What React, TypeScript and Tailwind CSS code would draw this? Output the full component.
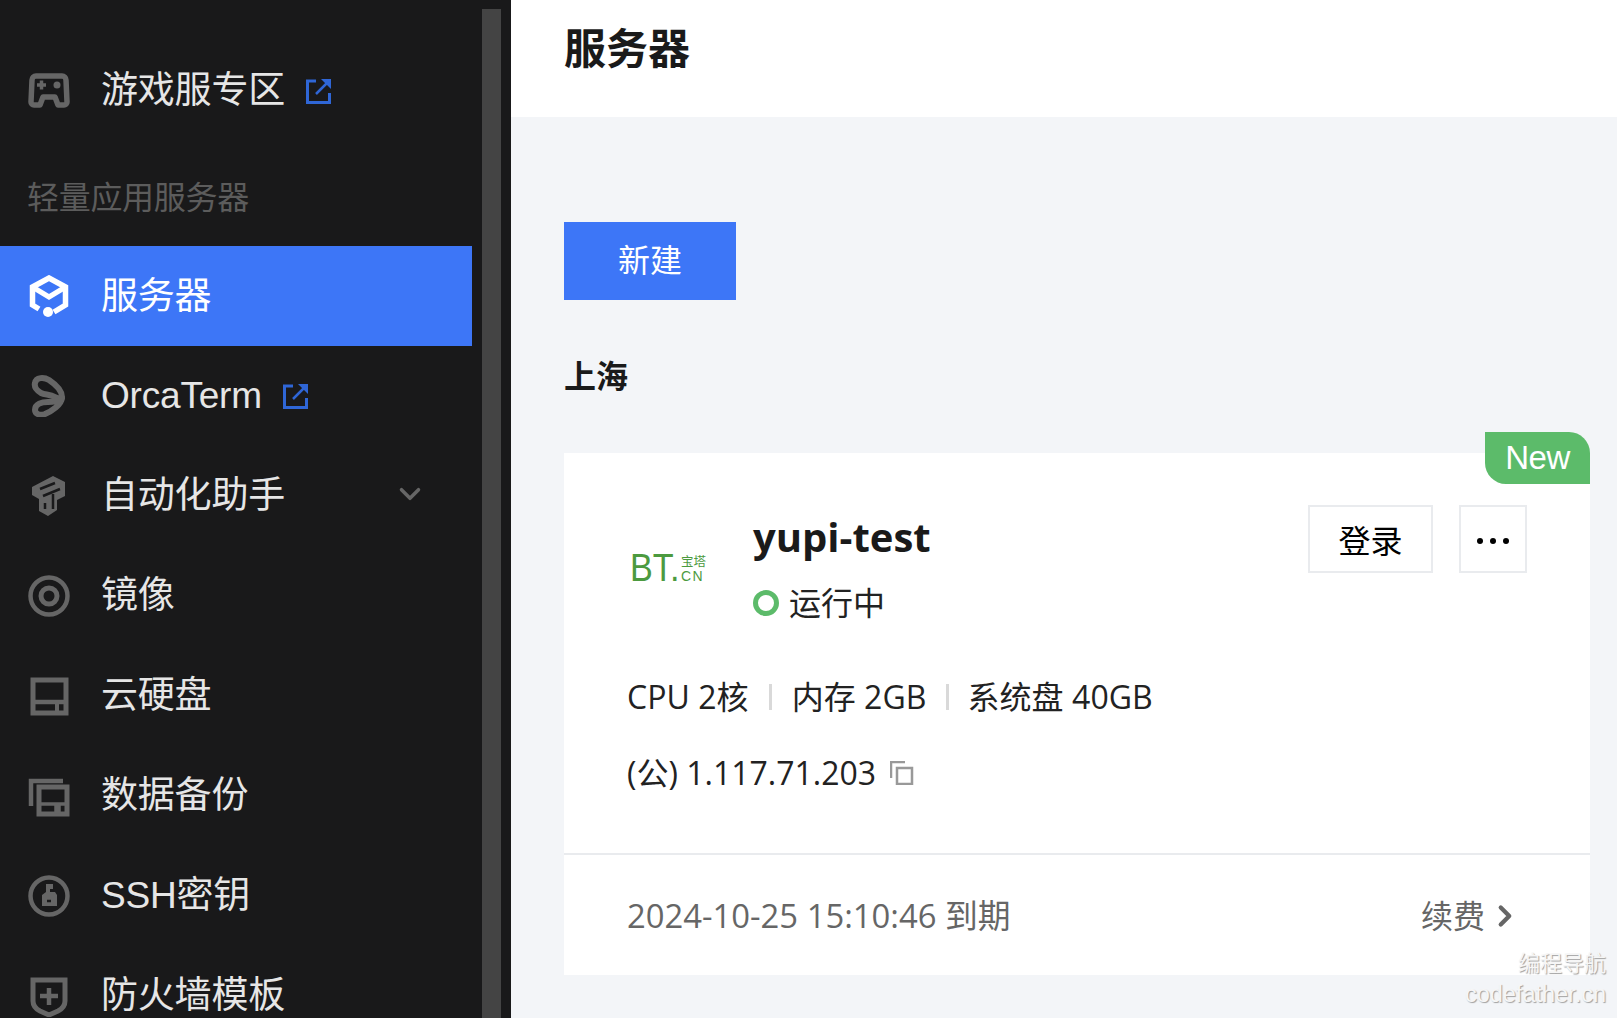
import type { ReactNode } from "react";
import { ChevronDown, ChevronRight } from "lucide-react";

function Icon({ children }: { children: ReactNode }) {
  return (
    <svg viewBox="0 0 42 42" className="h-[42px] w-[42px] shrink-0 text-[#666666]" fill="none">
      {children}
    </svg>
  );
}

const GameIcon = () => (
  <Icon>
    <path d="M8 6h26a4 4 0 0 1 4 4l1 22a3 3 0 0 1-3 3h-6l-3-8H15l-3 8H6a3 3 0 0 1-3-3l1-22a4 4 0 0 1 4-4z" stroke="currentColor" strokeWidth="5.500" strokeLinejoin="round" />
    <path d="M9 15h9M13.500 10.500v9" stroke="currentColor" strokeWidth="3.500" />
    <circle cx="29" cy="15" r="3.500" fill="currentColor" />
  </Icon>
);

const ServerIcon = () => (
  <svg viewBox="0 0 42 42" className="h-[42px] w-[42px] shrink-0 text-white" fill="none">
    <path d="M11 34 4.500 30V12L21 3l16.500 9v18L26 37" stroke="currentColor" strokeWidth="5.500" />
    <path d="M4.500 12 21 22l16.500-10" stroke="currentColor" strokeWidth="5" />
    <circle cx="20" cy="37" r="5" fill="currentColor" />
  </svg>
);

const OrcaIcon = () => (
  <Icon>
    <path d="M7 8C8 2 16 2 21 5c6 4 13 10 13 17 0 2-4 2-7 0-5-3-10-2-14-4C8 15 6 12 7 8z" stroke="currentColor" strokeWidth="6" strokeLinejoin="round" />
    <path d="M34 23c-1 7-10 13-17 16-5 2-10 0-10-4 0-6 7-8 13-8s10-1 14-4z" stroke="currentColor" strokeWidth="6" strokeLinejoin="round" />
  </Icon>
);

const TetrisIcon = () => (
  <Icon>
    <path d="M4 12 25 1l12 6v14l-8 4v10l-9 6-9-5V24l-7-4z" fill="currentColor" />
    <path d="M12 14 27 8M15 21l17-7M25 19v15M17 28v6" stroke="#19191a" strokeWidth="2.500" />
  </Icon>
);

const ImageIcon = () => (
  <Icon>
    <circle cx="21" cy="21" r="18.500" stroke="currentColor" strokeWidth="4.500" />
    <circle cx="21" cy="21" r="8" stroke="currentColor" strokeWidth="5" />
  </Icon>
);

const DiskIcon = () => (
  <Icon>
    <path d="M5 5h33v33H5z" stroke="currentColor" strokeWidth="5" />
    <path d="M5 27h33" stroke="currentColor" strokeWidth="4.500" />
    <path d="M27 29h4v7h-4z" fill="currentColor" />
  </Icon>
);

const BackupIcon = () => (
  <Icon>
    <path d="M3 31V6h32" stroke="currentColor" strokeWidth="4.500" />
    <path d="M11 12h28v27H11z" stroke="currentColor" strokeWidth="5" />
    <path d="M11 29h28M28 31h3v6h-3z" stroke="currentColor" strokeWidth="3.500" />
  </Icon>
);

const KeyIcon = () => (
  <Icon>
    <circle cx="21" cy="21" r="18.500" stroke="currentColor" strokeWidth="4.500" />
    <path d="M18 9h7v5h-3v3h5l2 3v11H14V20l4-3z" fill="currentColor" />
    <path d="M19 26h4" stroke="#19191a" strokeWidth="2.500" />
  </Icon>
);

const ShieldIcon = () => (
  <Icon>
    <path d="M5 5h32v21c0 5-3 8-7 10l-9 4-9-4c-4-2-7-5-7-10z" stroke="currentColor" strokeWidth="5" />
    <path d="M21 13v17M12 21h18" stroke="currentColor" strokeWidth="4.500" />
  </Icon>
);

const ExternalIcon = () => (
  <svg viewBox="0 0 25 25" className="ml-[21px] h-[25px] w-[25px] shrink-0 text-[#2f66d6]" fill="none">
    <path d="M10 2H1.500v21.500H23.500V14" stroke="currentColor" strokeWidth="3" />
    <path d="M10 15 21 4" stroke="currentColor" strokeWidth="2.500" />
    <path d="M15 0h10v10z" fill="currentColor" />
  </svg>
);

function NavItem({
  icon,
  label,
  active,
  external,
  expand,
}: {
  icon: ReactNode;
  label: string;
  active?: boolean;
  external?: boolean;
  expand?: boolean;
}) {
  return (
    <div className={`flex h-[100px] items-center pl-[28px] ${active ? "bg-[#3d76f7] text-white" : "text-[#e6e6e6]"}`}>
      <span className="flex w-[73px] shrink-0">{icon}</span>
      <span className={`text-[37px] leading-none tracking-[-0.2px] ${active ? "" : "pb-[1px]"}`}>{label}</span>
      {external && <ExternalIcon />}
      {expand && <ChevronDown className="mb-[5px] ml-auto mr-[45px] h-[34px] w-[34px] text-[#666666]" strokeWidth={2.5} />}
    </div>
  );
}

function Sidebar() {
  return (
    <aside className="flex h-full w-[511px] shrink-0 bg-[#19191a] font-['Liberation_Sans','Noto_Sans_CJK_SC',sans-serif]">
      <nav className="w-[472px] shrink-0 pt-[41px]">
        <NavItem icon={<GameIcon />} label="游戏服专区" external />
        <div className="flex h-[105px] items-center pl-[27px] pt-[9px] text-[32px] tracking-[-0.3px] text-[#5c5c5c]">
          轻量应用服务器
        </div>
        <NavItem icon={<ServerIcon />} label="服务器" active />
        <NavItem icon={<OrcaIcon />} label="OrcaTerm" external />
        <NavItem icon={<TetrisIcon />} label="自动化助手" expand />
        <NavItem icon={<ImageIcon />} label="镜像" />
        <NavItem icon={<DiskIcon />} label="云硬盘" />
        <NavItem icon={<BackupIcon />} label="数据备份" />
        <NavItem icon={<KeyIcon />} label="SSH密钥" />
        <NavItem icon={<ShieldIcon />} label="防火墙模板" />
      </nav>
      <div className="ml-[10px] mt-[9px] w-[19px] bg-[#444444]" />
    </aside>
  );
}

function BtLogo() {
  return (
    <div className="flex w-[126px] shrink-0 items-end pl-[3px] text-[#4c9a3f]">
      <span className="inline-block w-[51px] origin-left scale-x-[0.9] font-['Liberation_Sans',sans-serif] text-[38px] leading-[30px]">BT.</span>
      <span className="flex flex-col font-['Liberation_Sans','Noto_Sans_CJK_SC',sans-serif]">
        <span className="text-[12.500px] leading-[14px]">宝塔</span>
        <span className="text-[14px] leading-[14px] tracking-[1.500px]">CN</span>
      </span>
    </div>
  );
}

function ServerCard() {
  return (
    <div className="relative mt-[55px] h-[522px] bg-white">
      <div className="absolute right-0 top-[-21px] flex h-[52px] w-[105px] items-center justify-center rounded-tr-[21px] rounded-bl-[21px] bg-[#5cbb6a] font-['Liberation_Sans',sans-serif] text-[33px] tracking-[-0.5px] text-white">
        New
      </div>
      <div className="h-[400px] px-[63px] pt-[52px]">
        <div className="flex items-start">
          <div className="flex h-[78px] items-end"><BtLogo /></div>
          <div className="flex-1">
            <div className="h-[64px] text-[40px] font-bold leading-[64px] text-[#1a1a1a]">yupi-test</div>
            <div className="mt-[14px] flex items-center text-[32px] leading-[40px] text-[#222222]">
              <span className="mr-[10px] h-[26px] w-[26px] rounded-full border-[5px] border-[#5cbb6a]" />
              运行中
            </div>
          </div>
          <button className="h-[68px] w-[125px] border-2 border-[#e9ebee] pt-[3px] text-[32px] text-black">登录</button>
          <button className="ml-[26px] flex h-[68px] w-[68px] items-center justify-center gap-[7px] border-2 border-[#e9ebee] pt-[3px]">
            <span className="h-[6px] w-[6px] rounded-full bg-black" />
            <span className="h-[6px] w-[6px] rounded-full bg-black" />
            <span className="h-[6px] w-[6px] rounded-full bg-black" />
          </button>
        </div>
        <div className="mt-[54px] flex h-[40px] items-center text-[32px] tracking-[0.05px] text-[#222222]">
          <span>CPU 2核</span>
          <span className="mx-[20px] h-[26px] w-[3px] bg-[#d9d9d9]" />
          <span>内存 2GB</span>
          <span className="mx-[19px] h-[26px] w-[3px] bg-[#d9d9d9]" />
          <span>系统盘 40GB</span>
        </div>
        <div className="mt-[36px] flex h-[40px] items-center text-[32px] text-[#222222]">
          <span>(公) 1.117.71.203</span>
          <svg viewBox="0 0 24 24" className="ml-[14px] h-[24px] w-[24px] text-[#999999]" fill="none">
            <path d="M1 17V1h14" stroke="currentColor" strokeWidth="2.500" />
            <path d="M7 7h15v16H7z" stroke="currentColor" strokeWidth="2.500" />
          </svg>
        </div>
      </div>
      <div className="flex h-[122px] items-center justify-between border-t-2 border-[#e9ebee] pl-[63px] pr-[68px] pt-[2px] text-[32.800px] text-[#666666]">
        <span>2024-10-25 15:10:46 到期</span>
        <span className="flex items-center text-[32px]">
          续费
          <ChevronRight className="ml-[3px] h-[34px] w-[34px]" strokeWidth={3} />
        </span>
      </div>
    </div>
  );
}

export default function App() {
  return (
    <div className="relative flex h-[1018px] w-[1617px] overflow-hidden bg-[#f3f5f8] font-['Open_Sans','Noto_Sans_CJK_SC',sans-serif]">
      <Sidebar />
      <main className="min-w-0 flex-1">
        <header className="flex h-[117px] items-center bg-white pb-[23px] pl-[53px] text-[42px] font-bold text-[#1a1a1a]">
          服务器
        </header>
        <div className="pl-[53px] pr-[27px] pt-[105px]">
          <button className="flex h-[78px] w-[172px] items-center justify-center bg-[#3d76f7] pb-[2px] text-[32px] text-white">新建</button>
          <h2 className="mt-[54px] text-[32px] font-bold leading-[44px] text-[#1a1a1a]">上海</h2>
        </div>
        <div className="pl-[53px] pr-[27px]">
          <ServerCard />
        </div>
      </main>
      <div className="absolute bottom-[10px] right-[11px] flex flex-col items-end font-['Liberation_Sans','Noto_Sans_CJK_SC',sans-serif] text-[#f6f6f6] [text-shadow:1px_1px_1px_#a0a0a0]">
        <span className="text-[22px] leading-[32px]">编程导航</span>
        <span className="text-[23.500px] leading-[28px]">codefather.cn</span>
      </div>
    </div>
  );
}
